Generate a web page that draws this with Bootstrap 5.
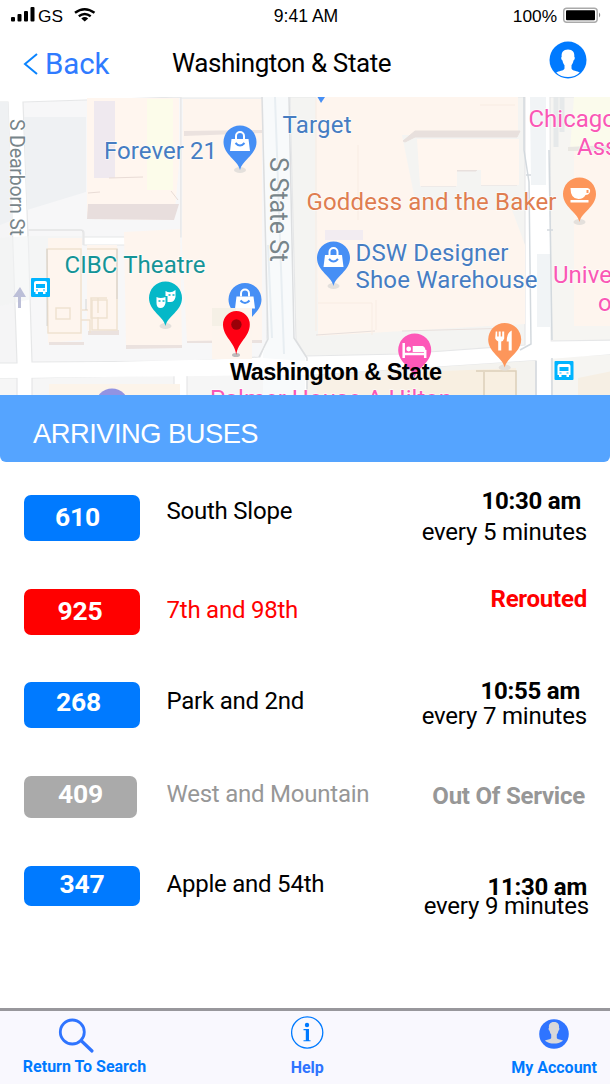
<!DOCTYPE html>
<html lang="en">
<head>
<meta charset="utf-8">
<meta name="viewport" content="width=device-width, initial-scale=1">
<title>Washington &amp; State</title>
<link href="https://cdn.jsdelivr.net/npm/bootstrap@5.3.0/dist/css/bootstrap.min.css" rel="stylesheet">
<style>
body{font-family:Roboto,sans-serif;color:#000;background:#fff}
.screen{width:610px;height:1084px;overflow:hidden}
svg{display:block;flex:none}
.status{height:32px;font:17.3px/32px "Liberation Sans",sans-serif;grid-template-columns:1fr auto 1fr;padding:0 8px 0 11px}
.clock{font-size:17.6px;margin-right:1px}
.topbar{height:65px;padding:0 23px 0 23px}
.back{color:#2f7bff;font-size:29.5px;line-height:36px;gap:7px;text-decoration:none;width:149px;margin-top:-2px;letter-spacing:-.15px}
.title{font-size:26px;line-height:30px;letter-spacing:-.42px;font-weight:400;padding-bottom:4px}
.map{height:298px}
.banner{height:67px;background:#55a4ff;color:#fff;font:27.3px/34px "Liberation Sans",sans-serif;letter-spacing:-.5px;padding:22px 0 0 33px;border-radius:0 0 6px 6px}
.arrivals{height:546px;padding:13px 23px 0 23.500px}
.bus{height:var(--h);font-size:24px;line-height:28px;letter-spacing:-.23px}
.route{width:116px;height:46px;margin-top:20px;border-radius:7px;background:#007aff;color:#fff;font-size:26.5px;font-weight:700;line-height:30px;padding:var(--np) 0 0 var(--nx)}
.dest{margin-left:27px;padding-top:var(--dp)}
.when{padding-top:var(--tp)}
.when strong{display:block;font-weight:700;margin-right:var(--tr,0)}
.when span{display:block;margin-top:var(--gap);letter-spacing:-.19px}
.bus-610{--h:94px;--np:7px;--nx:31.500px;--dp:22px;--tp:12px;--tr:6px;--gap:3px}
.bus-925{--h:93px;--np:7px;--nx:34px;--dp:27px;--tp:16px;color:#f00}
.bus-925 .route{background:#f00}
.bus-268{--h:94px;--np:5px;--nx:32.500px;--dp:25px;--tp:15px;--tr:7px;--gap:-3px}
.bus-409{--h:90px;--np:3px;--nx:34.500px;--dp:24px;--tp:26px;--tr:2px;color:#979797}
.bus-409 .route{background:#aaa;width:113px;height:42px;margin-right:3px}
.bus-347{--h:90px;--np:3px;--nx:36px;--dp:24px;--tp:27px;--gap:-9px}
.bus-347 .route{height:40px}
.bus-347 .when span{margin-right:-2px}
.tabs{height:76px;background:#f9f8fe;border-top:3px solid #98979c;padding:0 13px 0 22.500px;grid-template-columns:1fr auto 1fr}
.tabs a{color:#007aff;font-size:16px;font-weight:700;line-height:20px;text-decoration:none}
.tabs a svg{margin-bottom:1px}
.tabs .info{color:#2f74ff;margin-right:5px}
</style>
</head>
<body>
<div class="screen d-flex flex-column">
  <div class="status d-grid">
    <div class="d-flex align-items-center">
      <svg width="25" height="32"><g><rect y="17" width="4" height="4.5" rx="1"/><rect x="6.5" y="14" width="4" height="7.500" rx="1"/><rect x="13" y="11" width="4" height="10.500" rx="1"/><rect x="19.500" y="7" width="4" height="14.500" rx="1"/></g></svg>
      <span style="margin-left:2px">GS</span>
      <svg width="24" height="32" viewBox="73 0 24 32" style="margin-left:10px" fill="none" stroke="#000" stroke-width="2.4"><path d="M75 12.800Q84.500 5.500 94.500 12.800M78.800 16.300Q84.700 11.800 90.700 16.300"/><path d="M81.300 18.400Q84.700 15.800 88.200 18.400L84.700 21.500Z" fill="#000" stroke="none"/></svg>
    </div>
    <div class="clock">9:41 AM</div>
    <div class="d-flex align-items-center justify-content-end">
      <span style="margin-right:5px">100%</span>
      <svg width="40" height="32" viewBox="562 0 40 32"><rect x="563.700" y="8.200" width="33.500" height="14" rx="3" fill="none" stroke="#aaa" stroke-width="1.400"/><rect x="566" y="10.200" width="29" height="10" rx="1"/><path d="M599 12.500q2.500 2.500 0 5z" fill="#888"/></svg>
    </div>
  </div>
  <header class="topbar d-flex align-items-center">
    <a class="back d-flex align-items-center" href="#"><svg width="15" height="22" fill="none" stroke="#0a84ff" stroke-width="2"><path d="M14 1L2 11L14 21"/></svg>Back</a>
    <h1 class="title m-0 me-auto">Washington &amp; State</h1>
    <svg width="38" height="38" viewBox="0 0 38 38" style="margin-top:-9px"><circle cx="19" cy="19" r="18.500" fill="#007aff"/><path d="M19 8.500c4.700 0 6.800 3 6.300 7.300 1 .5.500 3.200-.8 3.700-.4 2.700-1.500 3.700-2 4.700v3.200c.6 2.400 6 2.500 8.200 4.100-3 3.100-7.400 4.600-11.700 4.600S9.900 34.400 7.300 31.500c2.200-1.600 7.600-1.700 8.200-4.100v-3.200c-.6-1-1.600-2-2-4.700-1.300-.5-1.800-3.200-.8-3.700C12.200 11.500 14.300 8.500 19 8.500Z" fill="#fff"/></svg>
  </header>
  <svg class="map" width="610" height="298" viewBox="0 97 610 298" font-family="Roboto,sans-serif" font-size="24">
    <defs>
      <path id="drop" d="M0 28C-2 18-16.500 13-16.500 0A16.500 16.500 0 0 1 16.500 0C16.500 13 2 18 0 28Z"/>
      <g id="bag"><ellipse cy="28" rx="6" ry="3" fill="#e4e0dc"/><use href="#drop" fill="#468ff5"/><path d="M-8.500-3H8.500L10 9H-10Z" fill="#fff"/><path d="M-4-3V-6A4 4 0 0 1 4-6V-3" fill="none" stroke="#fff" stroke-width="2"/><path d="M-4.500 1Q0 6 4.500 1" fill="none" stroke="#468ff5" stroke-width="2"/></g>
      <g id="stop"><rect width="19" height="19" rx="1" fill="#00b4ff"/><path d="M5 3h9q2 0 2 2v9h-1.500v2h-2.500v-2H7v2H4.500v-2H3V5q0-2 2-2Z" fill="#fff"/><path d="M5 6h9v4H5ZM5 11.500h2v1H5ZM12 11.500h2v1h-2Z" fill="#00b4ff"/></g>
    </defs>
    <rect y="97" width="610" height="298" fill="#fff"/>
    <g stroke="#e6e7e8" stroke-width="1.200">
      <path d="M-2 102H8L17 363H-2Z" fill="#f5f5f6"/>
      <path d="M23 102L181 97V237H28Z" fill="#f7f7f8"/>
      <path d="M28 230H82q2 0 2 3V245H174V237H181V98H264L267 340L260 357L187 361L32 362Z" fill="#f7f7f8"/>
      <path d="M-2 378H17V397H-2ZM32 378L174 375V397H32ZM187 375H265V397H187Z" fill="#f6f6f6"/>
      <path d="M290 97H525V345L402 354L306 356L296 340Z" fill="#f4f4f2"/>
      <path d="M307 375L536 360V397H307Z" fill="#f4f3ef"/>
      <path d="M550 97H612V340L551 341ZM551 357L612 354V397H551Z" fill="#f6f5f2"/>
    </g>
    <path d="M24 117L86 117V192L27 210ZM0 102H8L13 220L0 225Z" fill="#eff1f3"/>
    <path d="M87 98H179V165L174 220L87 219Z" fill="#fff6ef"/>
    <path d="M94 101H115V178H94Z" fill="#efe9ef"/><path d="M147 99H173V190H147Z" fill="#fcfcea"/>
    <path d="M109 178L143 177M88 193L100 192M171 191L178 200" stroke="#e9dcd6" fill="none"/>
    <path d="M88 204H179L174 220L87 219Z" fill="#e8dedd"/>
    <path d="M0 238L28 236H82V288L0 306Z" fill="#f2f3f4" opacity=".6"/>
    <path d="M29 230H81q2 0 2 3V245" stroke="#e2e2e2" fill="none"/>
    <g fill="#fef5ee">
      <path d="M183 99H262V341L187 342L182 245Z"/>
      <path d="M124 232L180 229L182 346H126Z"/>
      <path d="M48 238H82V340L48 343ZM87 245H117V330H87Z"/>
      <path d="M316 97H518V135H402L417 210H508V325H318Z"/>
      <path d="M574 97H612V326H574Z"/>
      <path d="M318 210H512L525 245V324L318 336Z"/>
    </g>
    <path d="M184 131L262 130V133L184 136ZM126 345L182 345V348L126 349ZM49 342H84V345H49ZM88 331L119 330V335H88ZM187 341L262 340V343H187Z" fill="#ebe2df"/>
    <path d="M403 141L415 131H520L517 137H415L405 142ZM457 166L480 165L476 171H457ZM421 186H456M481 185H517M316 335L375 331M402 331L515 328" fill="#e8e0dd" stroke="#e8e0dd"/>
    <path d="M417 139H519V185H481V170H457V186H420Z" fill="#fff6ef"/>
    <g fill="none" stroke="#efe2d1" stroke-width="1.500"><path d="M47 249H81V333H48ZM56 308H70V319H56ZM87 249H117V330H92V300H107V318H91V298H107M82 310H88M81 320H90V333M98 298V313M98 317V330"/></g>
    <path d="M47 249V326M117 249V299M86 299V310" stroke="#c9c7c4" fill="none" opacity=".7"/>
    <path d="M263 97H290L294 338L305 354V395H263V354L267 338Z" fill="#f8fafb"/>
    <path d="M262 97L268 339L259 357M289 97L294 338L307 358V395" fill="none" stroke="#dcdee0" stroke-width="1.500"/>
    <path d="M275 97L284 354M268 245L272 338" fill="none" stroke="#e8eef2" stroke-width="2"/>
    <path d="M0 365L262 358L306 361L536 346L612 341V354L536 360L306 375L0 378Z" fill="#fff"/>
    <path d="M530 97H548L551 395H537V340Z" fill="#fff"/>
    <path d="M530 97H546V185H531ZM537 254H551V327H537Z" fill="#f1f4f6"/>
    <path d="M524 97V150L529 182L531 344L520 350M549 150L552 340M536 361V395M552 358V395M526 175H531M547 230H553" fill="none" stroke="#d3d9de" stroke-width="1.500"/>
    <path d="M562 97V132M556 97V147" fill="none" stroke="#e6e9ea" stroke-width="5"/>
    <path d="M574 97H610V147L570 149Z" fill="#fbfbec"/><path d="M568 147L610 145V151H568Z" fill="#e9e7e2"/>
    <path d="M49 384H180V397H49Z" fill="#fcf4ea"/>
    <path d="M420 372L516 368V397H420Z" fill="#f8efe1"/><path d="M476 371H516V397M484 372V397" fill="none" stroke="#dccfb9" stroke-width="1.500"/>
    <path d="M317 377H420V397H317Z" fill="#f9f1e6"/><path d="M578 378L612 371V397H578Z" fill="#f6efe4"/>
    <rect x="325" y="230" width="38" height="10" fill="#f2ecf1"/>
    <path d="M316 98V331M480 105H515M358 145V220M318 303H372V335M376 300V330" fill="none" stroke="#f8ece3"/>
    <path d="M18 308V297H13L20 287L26 297H21V308Z" fill="#bcbfd8"/>
    <circle cx="112" cy="405" r="16.500" fill="#9293e2"/>
    <use href="#stop" x="31" y="278"/><use href="#stop" x="554.500" y="361"/>
    <path d="M317.500 97H325L321 103Z" fill="#468ff5"/>
    <use href="#bag" x="240" y="142"/><use href="#bag" x="333.500" y="258"/><use href="#bag" x="245" y="299.500"/>
    <rect x="212" y="308" width="40" height="51" fill="#fdf5ee"/><rect x="212" y="308" width="24" height="18" fill="#f5f0e6"/>
    <ellipse cx="236" cy="355" rx="4" ry="2" fill="#bbb"/>
    <path d="M236.300 355C235 342 223 337 223 324.500A13.400 13.400 0 0 1 249.800 324.500C249.800 337 237.600 342 236.300 355Z" fill="#ff0014"/><circle cx="236.400" cy="324.500" r="5.200" fill="#9b0008"/>
    <g transform="translate(165.500 298)"><ellipse cy="28" rx="6" ry="3" fill="#e4e0dc"/><use href="#drop" fill="#05b8c8"/><path d="M0-7q5 3 10-1V-1q-1 5-5 5H2V-2H0ZM-9-1q4 2 9 0V5q-1 5-5 5t-4-5Z" fill="#fff"/><path d="M3-3h2M7-3h2M-7 3h2M-3 3h2" stroke="#05b8c8" stroke-width="1.500"/></g>
    <g transform="translate(579.500 194)"><ellipse cy="28" rx="6" ry="3" fill="#e4e0dc"/><use href="#drop" fill="#fd965b"/><path d="M-9-6H8q4 1 2 5-1 2-4 2-2 4-7 4-8 0-8-11ZM-9 6H9V8.500H-9Z" fill="#fff"/><path d="M7-4h2v3H7Z" fill="#fd965b"/></g>
    <g transform="translate(504.700 339.500)"><ellipse cy="28" rx="6" ry="3" fill="#e4e0dc"/><use href="#drop" fill="#fd965b"/><path d="M-9-8h1.500v5h1.500v-5h2v5h1.500v-5H-.500V-1q-1 3-3 3V11h-3V2q-2-1-3-3ZM7-9V11H4V2H2Q2-7 7-9Z" fill="#fff"/></g>
    <g transform="translate(414.700 350)"><use href="#drop" fill="#fd58b8"/><path d="M-11-7V8M-11 4H10.500M10.500 8V0" fill="none" stroke="#fff" stroke-width="2.500"/><circle cx="-6" cy="-1" r="2.400" fill="#fff"/><path d="M-2-4H8q3 1 3 6H-2Z" fill="#fff"/></g>
    <g stroke="#fff" stroke-width="1.500" stroke-opacity=".7" paint-order="stroke">
      <g fill="#467dc2"><text x="104" y="158.500" textLength="113">Forever 21</text><text x="282.500" y="132.500" textLength="69">Target</text><text x="355.500" y="260.500" textLength="153">DSW Designer</text><text x="355.500" y="288" textLength="182">Shoe Warehouse</text></g>
      <text x="306.500" y="210" textLength="250" fill="#df7d50">Goddess and the Baker</text>
      <text x="64.500" y="272.500" textLength="141" fill="#159497">CIBC Theatre</text>
      <g fill="#fa57b5"><text x="528.500" y="127">Chicago</text><text x="577" y="155">Ass</text><text x="553" y="283">Unive</text><text x="598" y="311">o</text><text x="210" y="407" textLength="242">Palmer House A Hilton</text></g>
      <g fill="#78858a"><text transform="translate(9.500 119) rotate(90)" font-size="19.500" textLength="117">S Dearborn St</text><text transform="translate(269.500 157) rotate(90)" font-size="25" textLength="105">S State St</text></g>
    </g>
    <text x="230" y="380" font-family="Liberation Sans,sans-serif" font-weight="700" font-size="23.500" textLength="212">Washington &amp; State</text>
  </svg>
  <h2 class="banner m-0">ARRIVING BUSES</h2>
  <main class="arrivals">
    <div class="bus bus-610 d-flex align-items-start"><div class="route">610</div><div class="dest">South Slope</div><div class="when ms-auto text-end"><strong>10:30 am</strong><span>every 5 minutes</span></div></div>
    <div class="bus bus-925 d-flex align-items-start"><div class="route">925</div><div class="dest">7th and 98th</div><div class="when ms-auto text-end"><strong>Rerouted</strong></div></div>
    <div class="bus bus-268 d-flex align-items-start"><div class="route">268</div><div class="dest">Park and 2nd</div><div class="when ms-auto text-end"><strong>10:55 am</strong><span>every 7 minutes</span></div></div>
    <div class="bus bus-409 d-flex align-items-start"><div class="route">409</div><div class="dest">West and Mountain</div><div class="when ms-auto text-end"><strong>Out Of Service</strong></div></div>
    <div class="bus bus-347 d-flex align-items-start"><div class="route">347</div><div class="dest">Apple and 54th</div><div class="when ms-auto text-end"><strong>11:30 am</strong><span>every 9 minutes</span></div></div>
  </main>
  <nav class="tabs d-grid">
    <a href="#" class="d-flex flex-column align-items-center justify-self-start me-auto"><svg width="124" height="45" viewBox="23 1011 124 45" fill="none" stroke="#2f74ff"><circle cx="72.300" cy="1032" r="12" stroke-width="2.800"/><path d="M81 1040.500L92 1051" stroke-width="3.200" stroke-linecap="round"/></svg>Return To Search</a>
    <a href="#" class="info d-flex flex-column align-items-center"><svg width="34" height="46" viewBox="289 1011 34 46"><circle cx="306.200" cy="1032.500" r="15.600" fill="none" stroke="#007aff" stroke-width="1.300"/><circle cx="306" cy="1025" r="2.200" fill="#007aff"/><path d="M302.500 1029H308V1040.200H309.500V1041.300H302.500V1040.200H304.800V1030.200H302.500Z" fill="#007aff"/></svg>Help</a>
    <a href="#" class="d-flex flex-column align-items-center ms-auto"><svg width="30" height="46" viewBox="539 1011 30 46"><circle cx="554" cy="1034" r="14.800" fill="#2f74ff"/><path d="M554 1022c4 0 5.500 2.500 5 5.800.8.400.4 2.600-.6 3-.3 2.100-1 3-1.600 3.700v3.500c.5 1.500 4.800 1.500 6.200 2.800-2.600 2.200-5.900 2.800-9 2.800s-6.500-.6-9-2.800c1.400-1.300 5.700-1.300 6.200-2.800v-3.500c-.6-.7-1.300-1.600-1.600-3.700-1-.4-1.400-2.600-.6-3-.5-3.300 1-5.800 5-5.800Z" fill="#d8d8da"/></svg>My Account</a>
  </nav>
</div>
<script src="https://cdn.jsdelivr.net/npm/bootstrap@5.3.0/dist/js/bootstrap.bundle.min.js"></script>
</body>
</html>
